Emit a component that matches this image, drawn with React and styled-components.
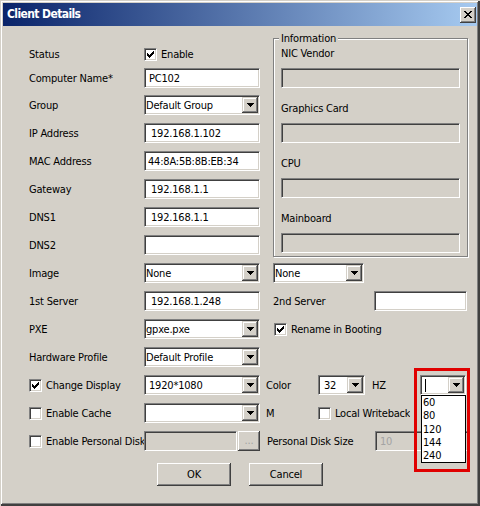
import React from 'react';
import styled, { createGlobalStyle } from 'styled-components';

const FONT = `"DejaVu Sans Condensed", "Liberation Sans", Tahoma, sans-serif`;

const Global = createGlobalStyle`
  html, body { margin: 0; padding: 0; background: #d4d0c8; }
  body { font-family: ${FONT}; font-size: 11px; line-height: 13px; letter-spacing: -0.2px; color: #000; }
  * { box-sizing: border-box; }
`;

const Window = styled.div`
  width: 480px;
  height: 506px;
  background: #d4d0c8;
  padding: 3px;
  display: flex;
  flex-direction: column;
  box-shadow: inset 1px 1px #d4d0c8, inset -2px -2px #404040, inset 2px 2px #fff, inset -3px -3px #808080;
`;

const TitleBar = styled.div`
  height: 23px;
  flex-shrink: 0;
  display: flex;
  align-items: center;
  justify-content: space-between;
  padding: 0 1px 0 4px;
  background: linear-gradient(to right, #0a246a, #a6caf0);
`;

const TitleText = styled.span`
  color: #fff;
  font-weight: bold;
  font-size: 12px;
  letter-spacing: -0.6px;
`;

const raised = `
  background: #d4d0c8;
  box-shadow: inset -1px -1px #404040, inset 1px 1px #fff, inset -2px -2px #808080, inset 2px 2px #d4d0c8;
`;

const CloseButton = styled.div`
  width: 16px;
  height: 16px;
  display: flex;
  align-items: center;
  justify-content: center;
  ${raised}
`;

const Body = styled.div`
  flex: 1;
  display: flex;
  flex-direction: column;
  padding: 12px 0 0 26px;
`;

const TopSection = styled.div`
  display: flex;
  align-items: flex-start;
  gap: 13px;
`;

const LeftColumn = styled.div`
  width: 231px;
  padding-top: 6px;
  display: flex;
  flex-direction: column;
`;

const Row = styled.div`
  display: flex;
  align-items: center;
  height: 20px;
  margin-top: ${p => (p.$mt ?? 8)}px;
`;

const Label = styled.span`
  width: ${p => p.$w ?? 115}px;
  margin-left: ${p => p.$ml ?? 0}px;
  flex-shrink: 0;
  white-space: nowrap;
  overflow: hidden;
`;

const CheckLabel = styled.span`
  display: flex;
  align-items: center;
  gap: 4px;
  white-space: nowrap;
  overflow: hidden;
  flex-shrink: 0;
  width: ${p => (p.$w ? `${p.$w}px` : 'auto')};
  margin-left: ${p => p.$ml ?? 0}px;
`;

const sunken = `
  border: 1px solid;
  border-color: #808080 #fff #fff #808080;
  box-shadow: inset 1px 1px #404040, inset -1px -1px #d4d0c8;
`;

const Field = styled.div`
  width: ${p => p.$w}px;
  height: 20px;
  flex-shrink: 0;
  margin-left: ${p => p.$ml ?? 0}px;
  display: flex;
  align-items: center;
  padding: 1px;
  ${sunken}
  background: ${p => (p.$disabled ? '#d4d0c8' : '#fff')};
  color: ${p => (p.$disabled ? '#a3a3a3' : '#000')};
  white-space: nowrap;
  overflow: hidden;
`;

const FieldText = styled.span`
  flex: 1;
  padding-left: ${p => p.$pl ?? 3}px;
  overflow: hidden;
`;

const ArrowButton = styled.span`
  width: 16px;
  height: 16px;
  flex-shrink: 0;
  display: flex;
  align-items: center;
  justify-content: center;
  background: #d4d0c8;
  box-shadow: inset -1px -1px #404040, inset 1px 1px #d4d0c8, inset -2px -2px #808080, inset 2px 2px #fff;
`;

const Box = styled.span`
  width: 13px;
  height: 13px;
  flex-shrink: 0;
  display: flex;
  align-items: center;
  justify-content: center;
  background: #fff;
  ${sunken}
`;

const GroupBox = styled.div`
  position: relative;
  width: 195px;
  height: 219px;
  border: 1px solid #808080;
  box-shadow: inset 1px 1px #fff, 1px 1px #fff;
  padding: 8px 7px 0 7px;
  display: flex;
  flex-direction: column;
  gap: 14px;
`;

const Legend = styled.span`
  position: absolute;
  top: -7px;
  left: 5px;
  padding: 0 2px;
  background: #d4d0c8;
  line-height: 13px;
`;

const InfoItem = styled.div`
  display: flex;
  flex-direction: column;
  gap: 8px;
`;

const InfoLabel = styled.span`
  height: 13px;
  line-height: 13px;
`;

const LowerSection = styled.div`
  display: flex;
  flex-direction: column;
  padding-top: 6px;
`;

const ComboWrap = styled.div`
  position: relative;
  flex-shrink: 0;
  margin-left: ${p => p.$ml ?? 0}px;
`;

const Caret = styled.span`
  width: 1px;
  height: 13px;
  margin-left: 3px;
  background: #000;
`;

const Highlight = styled.div`
  position: absolute;
  left: -6px;
  top: -7px;
  width: 56px;
  height: 104px;
  border: 3px solid #e00000;
  pointer-events: none;
  z-index: 2;
`;

const DropList = styled.ul`
  position: absolute;
  left: 1px;
  top: 20px;
  width: 45px;
  margin: 0;
  padding: 0;
  list-style: none;
  background: #fff;
  border: 1px solid #000;
  z-index: 1;
`;

const DropItem = styled.li`
  height: 13.3px;
  line-height: 13.3px;
  padding-left: 1px;
`;

const DotsButton = styled.span`
  width: 22px;
  height: 20px;
  flex-shrink: 0;
  margin-left: 1px;
  display: flex;
  align-items: flex-end;
  justify-content: center;
  padding-bottom: 4px;
  color: #a3a3a3;
  ${raised}
`;

const ButtonRow = styled.div`
  display: flex;
  gap: 18px;
  margin-top: 12px;
  padding-left: 128px;
`;

const PushButton = styled.button`
  width: 74px;
  height: 23px;
  padding: 0;
  border: none;
  font: inherit;
  letter-spacing: inherit;
  color: #000;
  ${raised}
`;

const CloseIcon = () => (
  <svg width="8" height="7" viewBox="0 0 8 7" shapeRendering="crispEdges">
    <path
      fill="#000"
      d="M0 0h2v1H0zM6 0h2v1H6zM1 1h2v1H1zM5 1h2v1H5zM2 2h4v1H2zM3 3h2v1H3zM2 4h4v1H2zM1 5h2v1H1zM5 5h2v1H5zM0 6h2v1H0zM6 6h2v1H6z"
    />
  </svg>
);

const ArrowIcon = () => (
  <svg width="7" height="4" viewBox="0 0 7 4" shapeRendering="crispEdges">
    <path fill="#000" d="M0 0h7v1H0zM1 1h5v1H1zM2 2h3v1H2zM3 3h1v1H3z" />
  </svg>
);

const CheckIcon = () => (
  <svg width="7" height="7" viewBox="0 0 7 7" shapeRendering="crispEdges">
    <path
      fill="#000"
      d="M6 0h1v1H6zM5 1h2v1H5zM0 2h1v1H0zM4 2h3v1H4zM0 3h2v1H0zM3 3h3v1H3zM0 4h5v1H0zM1 5h3v1H1zM2 6h1v1H2z"
    />
  </svg>
);

const CheckBox = ({ checked }) => <Box>{checked && <CheckIcon />}</Box>;

const TextBox = ({ w = 116, ml, value = '', pl, disabled }) => (
  <Field $w={w} $ml={ml} $disabled={disabled}>
    <FieldText $pl={pl}>{value}</FieldText>
  </Field>
);

const Combo = ({ w = 116, ml, value = '', pl = 0 }) => (
  <Field $w={w} $ml={ml}>
    <FieldText $pl={pl}>{value}</FieldText>
    <ArrowButton><ArrowIcon /></ArrowButton>
  </Field>
);

const info = ['NIC Vendor', 'Graphics Card', 'CPU', 'Mainboard'];
const rates = ['60', '80', '120', '144', '240'];

export default function App() {
  return (
    <>
      <Global />
      <Window>
        <TitleBar>
          <TitleText>Client Details</TitleText>
          <CloseButton><CloseIcon /></CloseButton>
        </TitleBar>
        <Body>
          <TopSection>
            <LeftColumn>
              <Row $mt={0}>
                <Label>Status</Label>
                <CheckLabel><CheckBox checked />Enable</CheckLabel>
              </Row>
              <Row $mt={4}>
                <Label>Computer Name*</Label>
                <TextBox value="PC102" />
              </Row>
              <Row $mt={7}>
                <Label>Group</Label>
                <Combo value="Default Group" />
              </Row>
              <Row>
                <Label>IP Address</Label>
                <TextBox value="192.168.1.102" pl={5} />
              </Row>
              <Row>
                <Label>MAC Address</Label>
                <TextBox value="44:8A:5B:8B:EB:34" pl={2} />
              </Row>
              <Row>
                <Label>Gateway</Label>
                <TextBox value="192.168.1.1" pl={5} />
              </Row>
              <Row>
                <Label>DNS1</Label>
                <TextBox value="192.168.1.1" pl={5} />
              </Row>
              <Row>
                <Label>DNS2</Label>
                <TextBox />
              </Row>
            </LeftColumn>
            <GroupBox>
              <Legend>Information</Legend>
              {info.map(name => (
                <InfoItem key={name}>
                  <InfoLabel>{name}</InfoLabel>
                  <TextBox w={179} disabled />
                </InfoItem>
              ))}
            </GroupBox>
          </TopSection>
          <LowerSection>
            <Row $mt={0}>
              <Label>Image</Label>
              <Combo value="None" />
              <Combo w={91} ml={13} value="None" />
            </Row>
            <Row>
              <Label>1st Server</Label>
              <TextBox value="192.168.1.248" pl={5} />
              <Label $ml={13} $w={101}>2nd Server</Label>
              <TextBox w={93} />
            </Row>
            <Row>
              <Label>PXE</Label>
              <Combo value="gpxe.pxe" />
              <CheckLabel $ml={14}><CheckBox checked />Rename in Booting</CheckLabel>
            </Row>
            <Row>
              <Label>Hardware Profile</Label>
              <Combo value="Default Profile" />
            </Row>
            <Row>
              <CheckLabel $w={115}><CheckBox checked />Change Display</CheckLabel>
              <Combo value="1920*1080" pl={3} />
              <Label $ml={6} $w={52}>Color</Label>
              <Combo w={47} value="32" pl={4} />
              <Label $ml={7} $w={48}>HZ</Label>
              <ComboWrap>
                <Field $w={46}>
                  <Caret />
                  <FieldText />
                  <ArrowButton><ArrowIcon /></ArrowButton>
                </Field>
                <DropList>
                  {rates.map(r => <DropItem key={r}>{r}</DropItem>)}
                </DropList>
                <Highlight />
              </ComboWrap>
            </Row>
            <Row>
              <CheckLabel $w={115}><CheckBox />Enable Cache</CheckLabel>
              <Combo />
              <Label $ml={6} $w={52}>M</Label>
              <CheckLabel><CheckBox />Local Writeback</CheckLabel>
            </Row>
            <Row>
              <CheckLabel $w={115}><CheckBox />Enable Personal Disk</CheckLabel>
              <TextBox w={93} disabled />
              <DotsButton>...</DotsButton>
              <Label $ml={7} $w={108}>Personal Disk Size</Label>
              <TextBox w={93} value="10" disabled />
            </Row>
            <ButtonRow>
              <PushButton>OK</PushButton>
              <PushButton>Cancel</PushButton>
            </ButtonRow>
          </LowerSection>
        </Body>
      </Window>
    </>
  );
}
